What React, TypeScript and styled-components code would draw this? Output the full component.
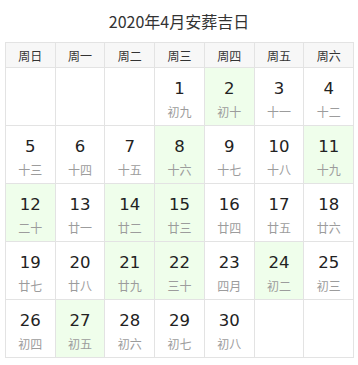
import React from "react";
import styled, { createGlobalStyle } from "styled-components";

const GlobalStyle = createGlobalStyle`
  html, body {
    margin: 0;
    padding: 0;
    background: #ffffff;
  }
  body {
    font-family: "Noto Sans CJK SC", "DejaVu Sans", sans-serif;
    color: #333333;
  }
`;

const Page = styled.div`
  width: 358px;
  padding: 0 5px;
  box-sizing: border-box;
`;

const Title = styled.h2`
  margin: 0;
  height: 42px;
  line-height: 42px;
  text-align: center;
  font-size: 16px;
  font-weight: normal;
  font-family: "Noto Sans CJK SC", sans-serif;
  color: #333333;
`;

const Grid = styled.div`
  display: grid;
  grid-template-columns: repeat(7, 1fr);
  grid-template-rows: 25px repeat(5, 58px);
  border-left: 1px solid #e3e3e3;
  border-top: 1px solid #e3e3e3;
  width: 349px;
  box-sizing: border-box;
`;

const HeadCell = styled.div`
  background: #f7f7f7;
  border-right: 1px solid #e3e3e3;
  border-bottom: 1px solid #e3e3e3;
  display: flex;
  align-items: center;
  justify-content: center;
  font-size: 12px;
  color: #333333;
  font-family: "Noto Sans CJK SC", sans-serif;
`;

const DayCell = styled.div<{ $good?: boolean }>`
  background: ${(p) => (p.$good ? "#effeeb" : "#ffffff")};
  border-right: 1px solid #e3e3e3;
  border-bottom: 1px solid #e3e3e3;
  display: flex;
  flex-direction: column;
  align-items: center;
  padding-top: 10px;
  box-sizing: border-box;
`;

const DayNum = styled.span`
  font-family: "DejaVu Sans", sans-serif;
  font-size: 16.5px;
  line-height: 22px;
  color: #222222;
`;

const Lunar = styled.span`
  margin-top: 1px;
  font-family: "Noto Sans CJK SC", sans-serif;
  font-size: 12px;
  line-height: 22px;
  color: #9c9c9c;
`;

const weekdays = ["周日", "周一", "周二", "周三", "周四", "周五", "周六"];

const lunar = [
  "初九", "初十", "十一", "十二", "十三", "十四", "十五", "十六", "十七", "十八",
  "十九", "二十", "廿一", "廿二", "廿三", "廿四", "廿五", "廿六", "廿七", "廿八",
  "廿九", "三十", "四月", "初二", "初三", "初四", "初五", "初六", "初七", "初八",
];

const goodDays = new Set([2, 8, 11, 12, 14, 15, 21, 22, 24, 27]);

const firstWeekday = 3;
const totalCells = 35;

export default function App() {
  const cells = Array.from({ length: totalCells }, (_, i) => {
    const day = i - firstWeekday + 1;
    return day >= 1 && day <= 30 ? day : null;
  });

  return (
    <>
      <GlobalStyle />
      <Page>
        <Title>2020年4月安葬吉日</Title>
        <Grid>
          {weekdays.map((w) => (
            <HeadCell key={w}>{w}</HeadCell>
          ))}
          {cells.map((day, i) =>
            day ? (
              <DayCell key={i} $good={goodDays.has(day)}>
                <DayNum>{day}</DayNum>
                <Lunar>{lunar[day - 1]}</Lunar>
              </DayCell>
            ) : (
              <DayCell key={i} />
            )
          )}
        </Grid>
      </Page>
    </>
  );
}
